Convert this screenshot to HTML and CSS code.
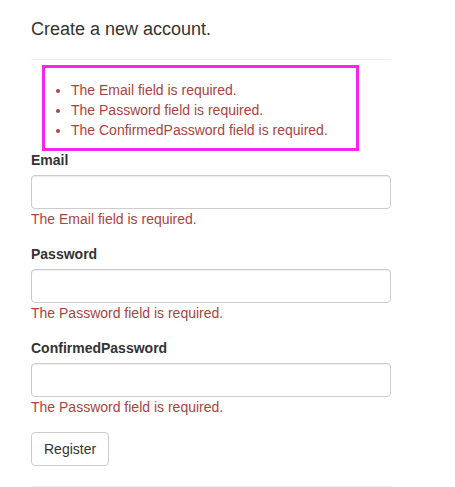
FILE: index.html
```html
<!DOCTYPE html>
<html lang="en">
<head>
<meta charset="utf-8">
<title>Register</title>
<link rel="stylesheet" href="styles.css">
</head>
<body>
<main class="page">
  <h4 class="title">Create a new account.</h4>
  <hr class="rule rule-top">
  <div class="summary">
    <ul class="summary-list">
      <li>The Email field is required.</li>
      <li>The Password field is required.</li>
      <li>The ConfirmedPassword field is required.</li>
    </ul>
  </div>
  <div class="form-group">
    <label class="label" for="email">Email</label>
    <input class="input" id="email" type="text">
    <span class="error">The Email field is required.</span>
  </div>
  <div class="form-group">
    <label class="label" for="password">Password</label>
    <input class="input" id="password" type="password">
    <span class="error">The Password field is required.</span>
  </div>
  <div class="form-group">
    <label class="label" for="confirm">ConfirmedPassword</label>
    <input class="input" id="confirm" type="password">
    <span class="error">The Password field is required.</span>
  </div>
  <button class="btn" type="button">Register</button>
  <hr class="rule rule-bottom">
</main>
</body>
</html>
```

FILE: styles.css
```css
html, body {
  margin: 0;
  padding: 0;
  background: #fff;
}

body {
  font-family: "Liberation Sans", Arial, Helvetica, sans-serif;
  font-size: 14px;
  line-height: 20px;
  color: #333;
}

.page {
  width: 360px;
  padding: 19px 0 0 31px;
}

.title {
  margin: 0 0 20px;
  font-size: 18px;
  font-weight: 400;
  line-height: 20px;
  color: #333;
}

.rule {
  margin: 0;
  height: 0;
  border: 0;
  border-top: 1px solid #eee;
}

.rule-top {
  margin-bottom: 5px;
}

.rule-bottom {
  margin-top: 20px;
}

.summary {
  box-sizing: border-box;
  width: 317px;
  margin: 0 0 -1px 11px;
  padding: 12px 0 8px;
  border: 3px solid #f526f0;
}

.summary-list {
  margin: 0;
  padding-left: 26px;
  color: #a94442;
}

.form-group {
  display: flex;
  flex-direction: column;
  align-items: flex-start;
  margin-bottom: 15px;
}

.label {
  margin-bottom: 5px;
  font-weight: 700;
  color: #333;
}

.input {
  box-sizing: border-box;
  width: 360px;
  height: 34px;
  margin: 0;
  padding: 6px 12px;
  font: inherit;
  color: #555;
  background: #fff;
  border: 1px solid #ccc;
  border-radius: 4px;
  box-shadow: inset 0 1px 1px rgba(0, 0, 0, 0.075);
}

.error {
  color: #a94442;
}

.btn {
  box-sizing: border-box;
  height: 34px;
  margin: 0;
  padding: 6px 12px;
  font: inherit;
  line-height: 20px;
  color: #333;
  background: #fff;
  border: 1px solid #ccc;
  border-radius: 4px;
}
```
